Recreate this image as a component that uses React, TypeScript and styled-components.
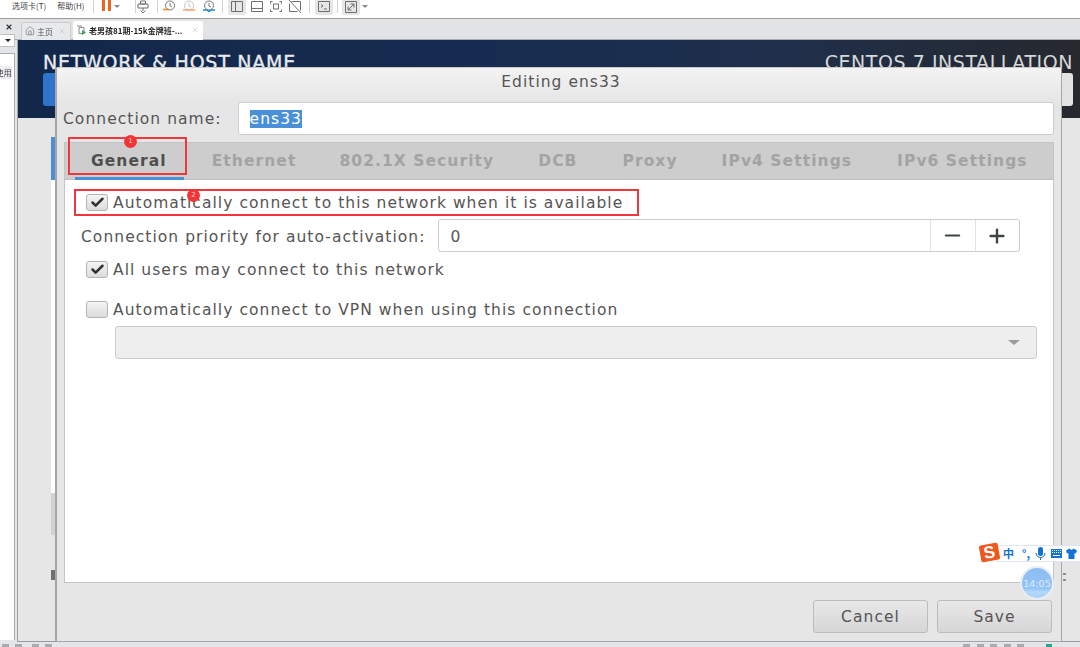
import React from "react";
import styled, { createGlobalStyle } from "styled-components";
import { Check, House, Minus, Plus, X } from "lucide-react";

const GlobalStyle = createGlobalStyle`
  html, body {
    margin: 0;
    padding: 0;
    background: #ffffff;
    overflow: hidden;
  }
  * { box-sizing: border-box; }
`;

const Page = styled.div`
  width: 1080px;
  height: 647px;
  display: flex;
  flex-direction: column;
  position: relative;
  overflow: hidden;
  font-family: "DejaVu Sans", sans-serif;
  color: #555;
  filter: blur(0.4px);
`;

const Toolbar = styled.div`
  height: 19px;
  flex: none;
  display: flex;
  align-items: flex-start;
  background: #fff;
  border-bottom: 1px solid #9c9c9c;
  font-family: "Noto Sans CJK SC", sans-serif;
  font-size: 8px;
  line-height: 12px;
  color: #444;
`;

const MenuItem = styled.span<{ $left: number }>`
  margin-left: ${(p) => p.$left}px;
  white-space: nowrap;
`;

const ToolIcon = styled.svg<{ $left: number; $active?: boolean }>`
  margin-left: ${(p) => p.$left}px;
  width: 14px;
  height: 14px;
  flex: none;
  box-sizing: content-box;
  border-radius: 0 0 2px 2px;
  background: ${(p) => (p.$active ? "#e6e6e6" : "transparent")};
  padding: ${(p) => (p.$active ? "0 2px 1px" : "0")};
`;

const ToolCaret = styled.i<{ $left: number }>`
  margin: 5px 0 0 ${(p) => p.$left}px;
  flex: none;
  border-left: 3px solid transparent;
  border-right: 3px solid transparent;
  border-top: 3px solid #8a8a8a;
`;

const Divider = styled.i<{ $left: number }>`
  margin-left: ${(p) => p.$left}px;
  width: 1px;
  height: 13px;
  background: #d4d4d4;
  flex: none;
`;

const Body = styled.div`
  flex: 1;
  display: flex;
  min-height: 0;
`;

const Sidebar = styled.div`
  width: 15px;
  flex: none;
  display: flex;
  flex-direction: column;
  background: #e4e5e7;
  overflow: hidden;
`;

const SidebarHead = styled.div`
  height: 15px;
  flex: none;
  display: flex;
  justify-content: flex-end;
  align-items: center;
  padding-right: 2px;
  color: #333;
`;

const SidebarSelect = styled.div`
  height: 13px;
  flex: none;
  background: #fff;
  border: 1px solid #bfc2c5;
  border-left: none;
  display: flex;
  justify-content: flex-end;
  align-items: center;
  padding-right: 3px;
  &::after {
    content: "";
    border-left: 3px solid transparent;
    border-right: 3px solid transparent;
    border-top: 3px solid #222;
  }
`;

const SidebarPanel = styled.div`
  flex: 1;
  margin: 6px 0 2px;
  padding-top: 12px;
  background: #fff;
  border-top: 1px solid #a8acb0;
  border-right: 1px solid #a8acb0;
`;

const SidebarText = styled.div`
  height: 13px;
  width: 12px;
  display: flex;
  justify-content: flex-end;
  font-family: "Noto Sans CJK SC", sans-serif;
  font-size: 8.5px;
  line-height: 13px;
  color: #444;
  background: #eceef0;
  white-space: nowrap;
`;

const Workspace = styled.div`
  flex: 1;
  display: flex;
  flex-direction: column;
  background: #e4e5e7;
  min-width: 0;
`;

const TabStrip = styled.div`
  height: 21px;
  flex: none;
  display: flex;
  align-items: flex-end;
  gap: 2px;
  padding-left: 6px;
  background: #e2e3e5;
  border-bottom: 1px solid #a7adb3;
`;

const VmTab = styled.div<{ $active?: boolean; $width: number }>`
  width: ${(p) => p.$width}px;
  height: ${(p) => (p.$active ? 19 : 18)}px;
  margin-bottom: -1px;
  display: flex;
  align-items: center;
  gap: 2px;
  padding: 0 4px 1px 3px;
  background: ${(p) => (p.$active ? "#fff" : "#e8e9eb")};
  border: ${(p) => (p.$active ? "none" : "1px solid #c9cbce")};
  border-bottom: none;
  border-radius: 2px 2px 0 0;
  font-family: "Noto Sans CJK SC", sans-serif;
  font-size: 8px;
  font-weight: ${(p) => (p.$active ? 700 : 400)};
  color: ${(p) => (p.$active ? "#222" : "#555")};
  white-space: nowrap;
`;

const TabLabel = styled.span`
  flex: 1;
  overflow: hidden;
`;

const Guest = styled.div`
  flex: 1;
  display: flex;
  flex-direction: column;
  margin-left: 2px;
  border-left: 1px solid #a0a0a0;
  border-bottom: 1px solid #9a9a9a;
  background: #e6e6e6;
`;

const Banner = styled.div`
  height: 78px;
  flex: none;
  display: flex;
  justify-content: space-between;
  padding: 11px 7px 0 25px;
  background: linear-gradient(90deg, #12274a 0%, #172c50 45%, #1f2f4c 70%, #26292e 100%);
  color: #e8ebef;
  font-size: 19px;
  line-height: 22px;
  white-space: nowrap;
`;

const BannerTitle = styled.div`
  letter-spacing: 0.75px;
  -webkit-text-stroke: 0.35px #e8ebef;
`;

const BannerRight = styled.div`
  color: #d6d8db;
  letter-spacing: 0.55px;
`;

const StatusBar = styled.div`
  height: 5px;
  flex: none;
  display: flex;
  gap: 6px;
  padding: 2px 0 0 2px;
  background: #e4e5e7;
`;

const StatusMark = styled.i<{ $left?: number; $green?: boolean }>`
  width: ${(p) => (p.$green ? 6 : 7)}px;
  height: 3px;
  margin-left: ${(p) => p.$left ?? 0}px;
  background: ${(p) => (p.$green ? "#2aa58e" : "#a9acaf")};
`;

// bits of the installer page that show round the dialog
const BannerButton = styled.div`
  position: absolute;
  left: 43px;
  top: 73px;
  width: 20px;
  height: 33px;
  background: #2e74cc;
  border-radius: 3px;
`;

const BannerSideButton = styled.div`
  position: absolute;
  left: 1058px;
  top: 73px;
  width: 15px;
  height: 33px;
  background: #e3e3e3;
  border-radius: 3px;
`;

const PeekStrip = styled.div<{ $top: number; $h: number; $color: string; $left?: number; $w?: number }>`
  position: absolute;
  left: ${(p) => p.$left ?? 51}px;
  top: ${(p) => p.$top}px;
  width: ${(p) => p.$w ?? 4}px;
  height: ${(p) => p.$h}px;
  background: ${(p) => p.$color};
`;

const Dialog = styled.div`
  position: absolute;
  left: 55px;
  top: 67px;
  width: 1007px;
  height: 575px;
  display: flex;
  flex-direction: column;
  background: #e6e6e6;
  border: 2px solid #a6a6a6;
  border-top: 1px solid #c8c8c8;
  border-right-width: 1px;
  border-bottom-width: 1px;
  border-radius: 3px 3px 0 0;
`;

const DialogTitle = styled.div`
  height: 34px;
  flex: none;
  display: flex;
  align-items: center;
  justify-content: center;
  padding: 0 0 6px 4px;
  background: linear-gradient(#f3f3f3, #e6e6e6);
  font-size: 15.5px;
  letter-spacing: 1.03px;
  color: #555;
`;

const NameRow = styled.div`
  height: 33px;
  flex: none;
  display: flex;
  align-items: center;
  gap: 16px;
  padding: 0 7px 0 6px;
`;

const FieldLabel = styled.span`
  font-size: 15.5px;
  letter-spacing: 1.05px;
  color: #555;
  white-space: nowrap;
`;

const RowLabel = styled(FieldLabel)`
  padding-top: 2px;
`;

const NameInput = styled.div`
  flex: 1;
  height: 33px;
  display: flex;
  align-items: center;
  padding-left: 11px;
  background: #fff;
  border: 1px solid #cdcdcd;
  border-radius: 3px;
`;

const Selected = styled.span`
  background: #4a90d9;
  color: #fff;
  font-size: 15.5px;
  letter-spacing: 1.05px;
  line-height: 18px;
`;

const Notebook = styled.div`
  flex: 1;
  display: flex;
  flex-direction: column;
  margin: 7px 7px 17px 7px;
  background: #fff;
  border: 1px solid #c4c4c4;
`;

const TabBar = styled.div`
  height: 37px;
  flex: none;
  display: flex;
  background: #cdcdcd;
  border-bottom: 1px solid #bdbdbd;
`;

const SettingsTab = styled.div<{ $left: number; $active?: boolean }>`
  margin-left: ${(p) => p.$left}px;
  padding-top: 9px;
  font-size: 15.5px;
  font-weight: 700;
  letter-spacing: 1.07px;
  white-space: nowrap;
  color: ${(p) => (p.$active ? "#4f4f4f" : "#a3a3a3")};
`;

const ActiveBar = styled.div`
  position: absolute;
  left: 75px;
  top: 177px;
  width: 109px;
  height: 3px;
  background: #4a90d9;
`;

const Panel = styled.div`
  flex: 1;
  display: flex;
  flex-direction: column;
`;

const CheckRow = styled.div<{ $top: number }>`
  margin-top: ${(p) => p.$top}px;
  margin-left: 21px;
  display: flex;
  align-items: center;
  gap: 5px;
  height: 20px;
`;

const Box = styled.span`
  width: 22px;
  height: 17px;
  flex: none;
  display: flex;
  align-items: center;
  justify-content: center;
  background: linear-gradient(#f4f4f4, #dcdcdc);
  border: 1px solid #b4b4b4;
  border-radius: 3px;
  color: #2e3436;
`;

const PriorityRow = styled.div`
  margin-top: 7px;
  margin-left: 16px;
  width: 939px;
  display: flex;
  align-items: center;
  gap: 13px;
`;

const Spin = styled.div`
  flex: 1;
  height: 33px;
  display: flex;
  background: #fff;
  border: 1px solid #cdcdcd;
  border-radius: 3px;
`;

const SpinValue = styled.div`
  flex: 1;
  padding: 2px 0 0 11px;
  display: flex;
  align-items: center;
  font-size: 15.5px;
  letter-spacing: 1px;
  color: #555;
`;

const SpinButton = styled.div`
  width: 44.5px;
  display: flex;
  align-items: center;
  justify-content: center;
  border-left: 1px solid #e2e2e2;
  color: #3f4446;
`;

const VpnSelect = styled.div`
  margin-top: 7px;
  margin-left: 50px;
  width: 922px;
  height: 33px;
  display: flex;
  align-items: center;
  justify-content: flex-end;
  padding-right: 16px;
  background: #eeeeee;
  border: 1px solid #cdcdcd;
  border-radius: 3px;
  &::after {
    content: "";
    border-left: 6px solid transparent;
    border-right: 6px solid transparent;
    border-top: 5px solid #9c9c9c;
  }
`;

const ActionRow = styled.div`
  height: 33px;
  flex: none;
  display: flex;
  justify-content: flex-end;
  gap: 9px;
  padding-right: 9px;
  margin-bottom: 8px;
`;

const ActionButton = styled.div`
  width: 115px;
  height: 33px;
  display: flex;
  align-items: center;
  justify-content: center;
  background: linear-gradient(#e8e8e8, #d6d6d6);
  border: 1px solid #bcbcbc;
  border-radius: 3px;
  font-size: 15.5px;
  letter-spacing: 1.05px;
  color: #555;
`;

const Callout = styled.div<{ $x: number; $y: number; $w: number; $h: number }>`
  position: absolute;
  left: ${(p) => p.$x}px;
  top: ${(p) => p.$y}px;
  width: ${(p) => p.$w}px;
  height: ${(p) => p.$h}px;
  border: 2px solid #f0383c;
  pointer-events: none;
`;

const Badge = styled.div<{ $x: number; $y: number }>`
  position: absolute;
  left: ${(p) => p.$x}px;
  top: ${(p) => p.$y}px;
  width: 13px;
  height: 13px;
  border-radius: 50%;
  background: #f23434;
  color: #ffd9d9;
  font-size: 7px;
  line-height: 13px;
  text-align: center;
`;

const ImeBar = styled.div`
  position: absolute;
  left: 996px;
  top: 545px;
  width: 84px;
  height: 17px;
  display: flex;
  align-items: center;
  background: #fff;
  border: 1px solid #dde6f2;
  border-right: none;
  color: #1272d8;
`;

const ImeLogo = styled.div`
  position: absolute;
  left: 980px;
  top: 544px;
  width: 19px;
  height: 17px;
  display: flex;
  align-items: center;
  justify-content: center;
  background: #f0561d;
  border-radius: 2px;
  transform: rotate(-10deg);
  color: #fff;
  font-family: "Liberation Sans", sans-serif;
  font-weight: 700;
  font-size: 17px;
`;

const ImeText = styled.span<{ $left: number; $w: number }>`
  margin-left: ${(p) => p.$left}px;
  width: ${(p) => p.$w}px;
  font-family: "Noto Sans CJK SC", sans-serif;
  font-size: 11px;
  font-weight: 700;
  line-height: 15px;
  flex: none;
`;

const ImeIcon = styled.svg<{ $left: number }>`
  width: 11px;
  height: 13px;
  flex: none;
  margin-left: ${(p) => p.$left}px;
  fill: #1272d8;
`;

const Clock = styled.div`
  position: absolute;
  left: 1022px;
  top: 568px;
  width: 30px;
  height: 30px;
  display: flex;
  align-items: center;
  justify-content: center;
  border-radius: 50%;
  background: linear-gradient(#8cbdf3 0%, #94c4f5 68%, #b4d8fa 80%, #a8d0f8 100%);
  box-shadow: 0 0 0 2px #e9eef4;
  color: #dbeafb;
  font-size: 9.5px;
`;

const tabs = [
  { label: "Ethernet", left: 45 },
  { label: "802.1X Security", left: 43 },
  { label: "DCB", left: 44 },
  { label: "Proxy", left: 45 },
  { label: "IPv4 Settings", left: 44 },
  { label: "IPv6 Settings", left: 45 },
];

function PanelIcon({ left, active, d }: { left: number; active?: boolean; d: string }) {
  return (
    <ToolIcon $left={left} $active={active} viewBox="0 0 14 14" fill="none" stroke="#6f6f6f" strokeWidth="1">
      <path d={d} />
    </ToolIcon>
  );
}

function HistoryIcon({ left, clock, line, d }: { left: number; clock: string; line: string; d: string }) {
  return (
    <ToolIcon $left={left} viewBox="0 0 14 14" fill="none" stroke={clock} strokeWidth="1">
      <circle cx="7" cy="5.5" r="4.500" />
      <path d="M7 3v3l2 1" />
      <path d={d} stroke={line} strokeWidth="1.5" />
    </ToolIcon>
  );
}

function Checkbox({ checked }: { checked?: boolean }) {
  return <Box>{checked && <Check size={15} strokeWidth={4} />}</Box>;
}

export default function App() {
  return (
    <Page>
      <GlobalStyle />
      <Toolbar>
        <MenuItem $left={12}>选项卡(T)</MenuItem>
        <MenuItem $left={11}>帮助(H)</MenuItem>
        <Divider $left={9} />
        <ToolIcon $left={6} viewBox="0 0 14 14">
          <path d="M2 0h3v11H2zM8 0h3v11H8z" fill="#f0641e" />
        </ToolIcon>
        <ToolCaret $left={0} />
        <Divider $left={15} />
        <PanelIcon left={0} d="M4.500 1h5v3h-5zM2 4h10v4H2zM7 8v3M4.500 10.500L7 13l2.500-2.500" />
        <Divider $left={7} />
        <HistoryIcon left={5} clock="#777" line="#f0841e" d="M0 9.500h6" />
        <HistoryIcon left={5} clock="#c4c4c4" line="#f4a070" d="M1 10h12" />
        <HistoryIcon left={6} clock="#777" line="#1e8ad0" d="M1 10h4l2 1.500 2-1.500h4" />
        <Divider $left={6} />
        <PanelIcon left={5} active d="M1.500 1.500h11v10h-11zM5.500 1.500v10" />
        <PanelIcon left={4} d="M1.500 1.500h11v10h-11zM1.500 8.500h11" />
        <PanelIcon left={5} d="M3.500 1.500h-2v2M10.500 1.500h2v2M3.500 11.500h-2v-2M10.500 11.500h2v-2M4.500 4h5v5h-5z" />
        <PanelIcon left={5} d="M3.500 1.500h9v9M1.500 3.500v8h8M1 0l12 13" />
        <Divider $left={7} />
        <PanelIcon left={5} active d="M1.500 1.500h11v10h-11zM4 4.500l2 1.500-2 1.500M7 9h3" />
        <Divider $left={4} />
        <PanelIcon left={4} active d="M1.500 1.500h11v11h-11zM4 10l6-6M6.500 4H10v3.500M4 6.500V10h3.500" />
        <ToolCaret $left={2} />
      </Toolbar>
      <Body>
        <Sidebar>
          <SidebarHead>
            <X size={8} strokeWidth={3.5} />
          </SidebarHead>
          <SidebarSelect />
          <SidebarPanel>
            <SidebarText>使用</SidebarText>
          </SidebarPanel>
        </Sidebar>
        <Workspace>
          <TabStrip>
            <VmTab $width={50}>
              <House size={10} color="#888" />
              <TabLabel>主页</TabLabel>
              <X size={8} color="#c4c4c4" />
            </VmTab>
            <VmTab $active $width={130}>
              <svg width="11" height="11" viewBox="0 0 11 11" fill="none" stroke="#888">
                <path d="M3 2.500h5v6H3zM1 1h5" />
                <path d="M6 5l4 2.500L6 10z" fill="#3aa655" stroke="none" />
              </svg>
              <TabLabel>老男孩81期-15k金牌班-...</TabLabel>
              <X size={8} color="#c4c4c4" />
            </VmTab>
          </TabStrip>
          <Guest>
            <Banner>
              <BannerTitle>NETWORK &amp; HOST NAME</BannerTitle>
              <BannerRight>CENTOS 7 INSTALLATION</BannerRight>
            </Banner>
          </Guest>
        </Workspace>
      </Body>
      <StatusBar>
        <StatusMark />
        <StatusMark />
        <StatusMark $left={4} />
        <StatusMark />
        <StatusMark $left={905} />
        <StatusMark $left={1} />
        <StatusMark />
        <StatusMark $left={1} />
        <StatusMark />
        <StatusMark $left={16} $green />
      </StatusBar>

      <BannerButton />
      <BannerSideButton />
      <PeekStrip $top={137} $h={43} $color="#4a90d9" />
      <PeekStrip $top={180} $h={313} $color="#ffffff" />
      <PeekStrip $top={493} $h={42} $color="#d2d2d2" />
      <PeekStrip $top={570} $h={10} $color="#6c6f72" />
      <PeekStrip $top={573} $h={2} $color="#8d8f91" $left={1063} $w={3} />
      <PeekStrip $top={579} $h={2} $color="#8d8f91" $left={1063} $w={3} />

      <Dialog>
        <DialogTitle>Editing ens33</DialogTitle>
        <NameRow>
          <FieldLabel>Connection name:</FieldLabel>
          <NameInput>
            <Selected>ens33</Selected>
          </NameInput>
        </NameRow>
        <Notebook>
          <TabBar>
            <SettingsTab $left={26} $active>
              General
            </SettingsTab>
            {tabs.map((t) => (
              <SettingsTab key={t.label} $left={t.left}>
                {t.label}
              </SettingsTab>
            ))}
          </TabBar>
          <Panel>
            <CheckRow $top={12}>
              <Checkbox checked />
              <RowLabel>Automatically connect to this network when it is available</RowLabel>
            </CheckRow>
            <PriorityRow>
              <RowLabel>Connection priority for auto-activation:</RowLabel>
              <Spin>
                <SpinValue>0</SpinValue>
                <SpinButton>
                  <Minus size={23} strokeWidth={2.2} />
                </SpinButton>
                <SpinButton>
                  <Plus size={22} strokeWidth={2.6} />
                </SpinButton>
              </Spin>
            </PriorityRow>
            <CheckRow $top={7}>
              <Checkbox checked />
              <RowLabel>All users may connect to this network</RowLabel>
            </CheckRow>
            <CheckRow $top={20}>
              <Checkbox />
              <RowLabel>Automatically connect to VPN when using this connection</RowLabel>
            </CheckRow>
            <VpnSelect />
          </Panel>
        </Notebook>
        <ActionRow>
          <ActionButton>Cancel</ActionButton>
          <ActionButton>Save</ActionButton>
        </ActionRow>
      </Dialog>

      <ActiveBar />
      <Callout $x={68} $y={137} $w={119} $h={38} />
      <Badge $x={124} $y={135}>1</Badge>
      <Callout $x={74} $y={189} $w={565} $h={27} />
      <Badge $x={187} $y={189}>2</Badge>

      <ImeBar>
        <ImeText $left={6} $w={11}>中</ImeText>
        <ImeText $left={8} $w={11}>°,</ImeText>
        <ImeIcon $left={2} viewBox="0 0 11 13">
          <rect x="3" y="0" width="5" height="9" rx="2.500" />
          <path d="M1 6c0 6 9 6 9 0M5.500 10.500V13" fill="none" stroke="#1272d8" />
        </ImeIcon>
        <ImeIcon $left={5} viewBox="0 0 11 13">
          <path d="M0 2h11v9H0zM1 3v1h1V3zM3 3v1h1V3zM5 3v1h1V3zM7 3v1h1V3zM9 3v1h1V3zM1 5v1h1V5zM3 5v1h1V5zM5 5v1h1V5zM7 5v1h1V5zM9 5v1h1V5zM2 8v1h7V8z" fillRule="evenodd" />
        </ImeIcon>
        <ImeIcon $left={4} viewBox="0 0 11 13">
          <path d="M3.500 1.500L0 3.500l1 3 1.500-.5V12h6V6L10 6.500l1-3-3.500-2c-.5 1.500-3.500 1.500-4 0z" />
        </ImeIcon>
      </ImeBar>
      <ImeLogo>S</ImeLogo>
      <Clock>14:05</Clock>
    </Page>
  );
}
